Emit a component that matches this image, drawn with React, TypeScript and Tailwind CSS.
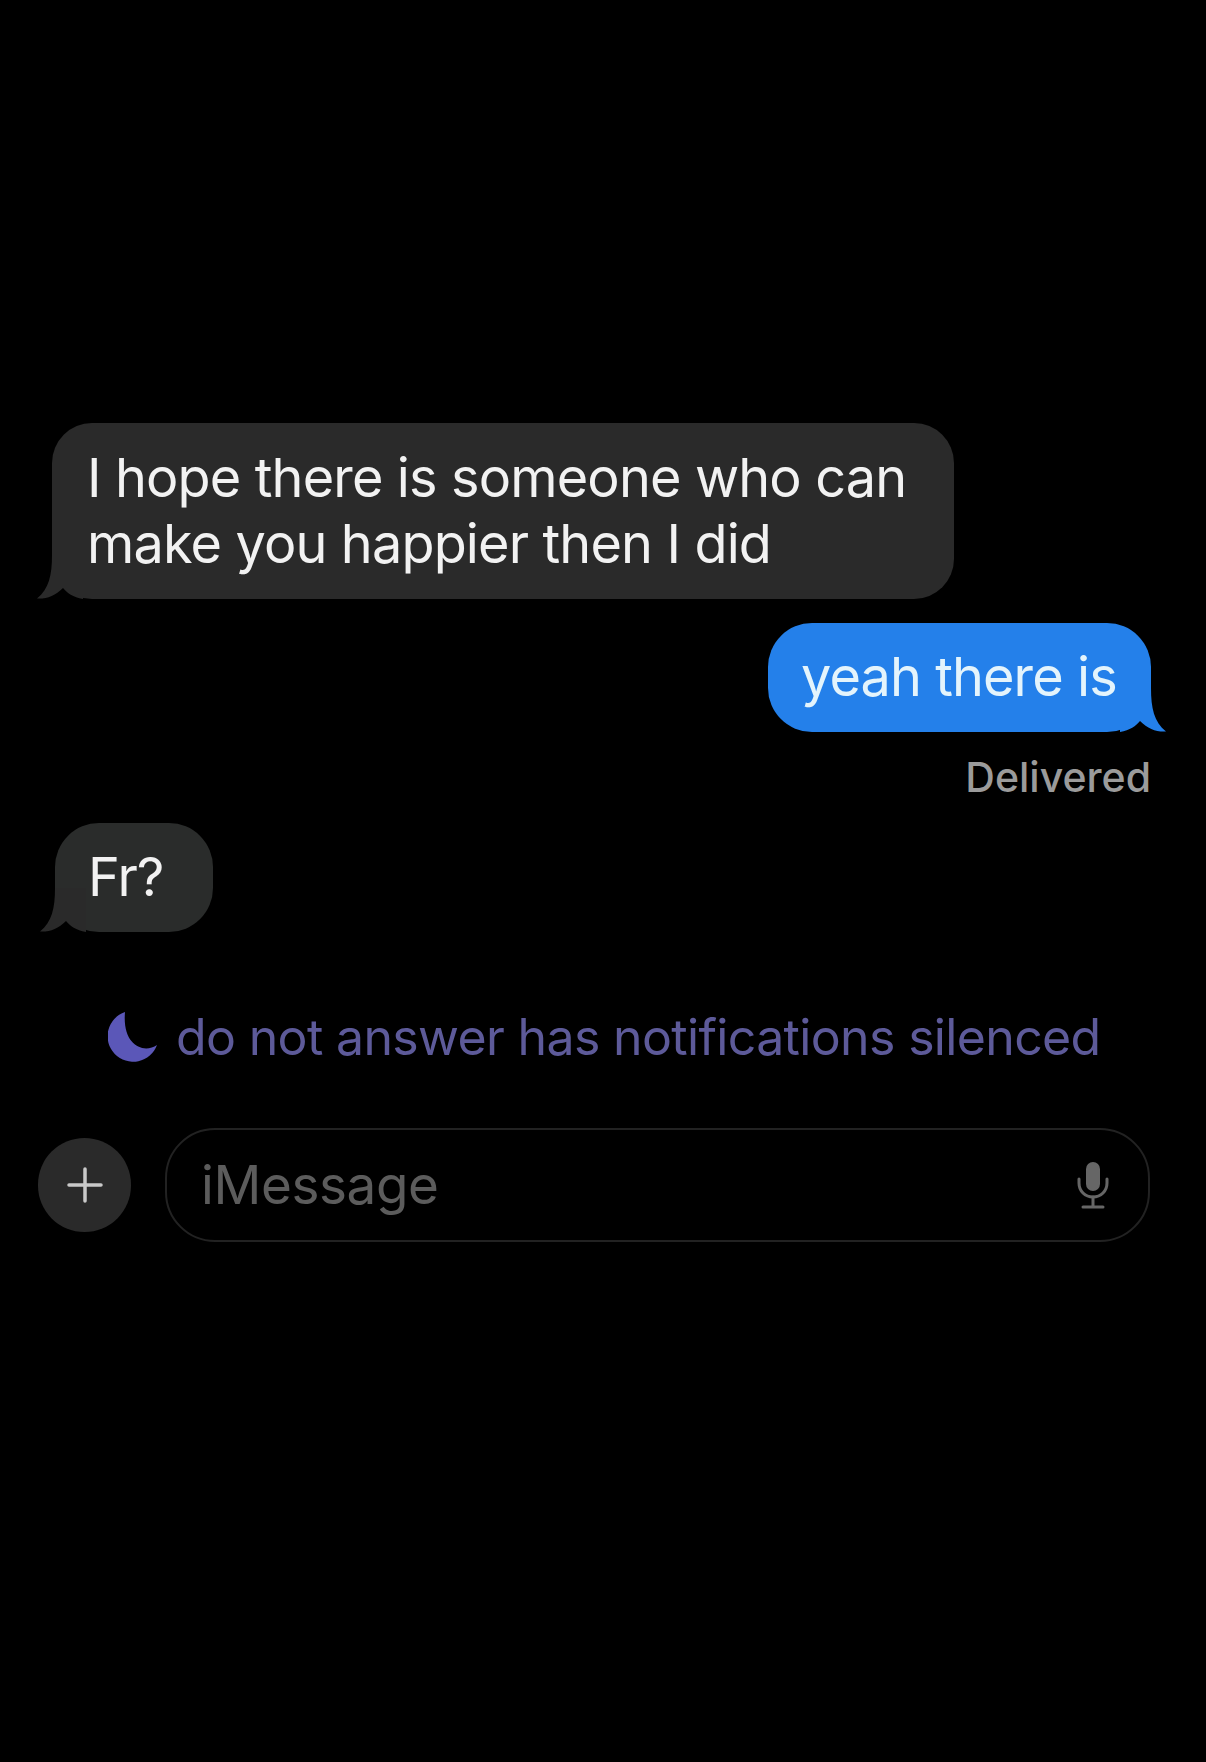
// App.tsx
function TailLeft() {
  return (
    <svg className="absolute bottom-0 left-[-15px]" width="46" height="44" viewBox="0 0 46 44" fill="#2a2a2a">
      <path d="M15 0 C15 20 12 34 0 43.5 C10 44 18 41 26 33 C30 38 36 42 46 44 L46 0 Z" />
    </svg>
  );
}

function TailRight() {
  return (
    <svg className="absolute right-[-15px] bottom-0" width="46" height="44" viewBox="0 0 46 44" fill="#2480ea">
      <path d="M31 0 C31 20 34 34 46 43.5 C36 44 28 41 20 33 C16 38 10 42 0 44 L0 0 Z" />
    </svg>
  );
}

export default function App() {
  return (
    <div className="flex h-[1762px] w-[1206px] flex-col overflow-hidden bg-black pt-[423px] font-['Inter',sans-serif] text-[#f2f2f2]">
      {/* first incoming */}
      <div className="pl-[52px]">
        <div className="relative h-[176px] w-[902px] rounded-[40px] bg-[#2a2a2a] pt-[22px] pl-[35px] text-[54px] leading-[66px] tracking-[-0.85px]">
          <TailLeft />
          <p className="relative">I hope there is someone who can</p>
          <p className="relative">make you happier then I did</p>
        </div>
      </div>

      {/* outgoing */}
      <div className="mt-[24px] flex justify-end pr-[55px]">
        <div className="relative h-[109px] w-[383px] rounded-[44px] bg-[#2480ea] pt-[21px] pl-[33px] text-[54px] leading-[66px] tracking-[-0.9px] text-[#e4f4fc]">
          <TailRight />
          <p className="relative">yeah there is</p>
        </div>
      </div>
      <div className="mt-[22px] pr-[55px] text-right text-[41px] leading-[46px] font-medium text-[#9b9b9b]">Delivered</div>

      {/* second incoming */}
      <div className="mt-[23px] pl-[55px]">
        <div className="relative h-[109px] w-[158px] rounded-[44px] bg-[#2a2c2b] pt-[21px] pl-[33px] text-[54px] leading-[66px] tracking-[-0.9px]">
          <TailLeft />
          <p className="relative">Fr?</p>
        </div>
      </div>

      {/* focus status */}
      <div className="mt-[75px] flex items-center pl-[108px]">
        <svg width="50" height="51" viewBox="0 0 50 51" fill="#5b57b8">
          <path d="M17 0 A25.5 25.5 0 1 0 49 33 C36 42 14 34 17 0 Z" />
        </svg>
        <span className="ml-[18px] text-[50px] leading-[60px] tracking-[-0.65px] text-[#5d5a99]">do not answer has notifications silenced</span>
      </div>

      {/* input row */}
      <div className="mt-[61px] flex items-center pl-[38px]">
        <div className="flex h-[94px] w-[93px] shrink-0 items-center justify-center rounded-full bg-[#2a2a2a]">
          <svg width="36" height="36" viewBox="0 0 36 36" stroke="#c9c9c9" strokeWidth="3.5" strokeLinecap="round">
            <path d="M18 2 V34 M2 18 H34" />
          </svg>
        </div>
        <div className="ml-[34px] flex h-[114px] w-[985px] items-center justify-between rounded-[50px] border-2 border-[#222222] pr-[39px] pl-[34px]">
          <span className="text-[53px] leading-[60px] tracking-[-0.4px] text-[#5c5c5c]">iMessage</span>
          <svg width="32" height="48" viewBox="0 0 32 48" fill="none" stroke="#666" strokeWidth="3" strokeLinecap="round">
            <rect x="9" y="1" width="14" height="29" rx="7" fill="#666" stroke="none" />
            <path d="M2 18 V22 C2 30 8 36 16 36 C24 36 30 30 30 22 V18" />
            <path d="M16 36 V46 M6 46 H26" />
          </svg>
        </div>
      </div>
    </div>
  );
}
